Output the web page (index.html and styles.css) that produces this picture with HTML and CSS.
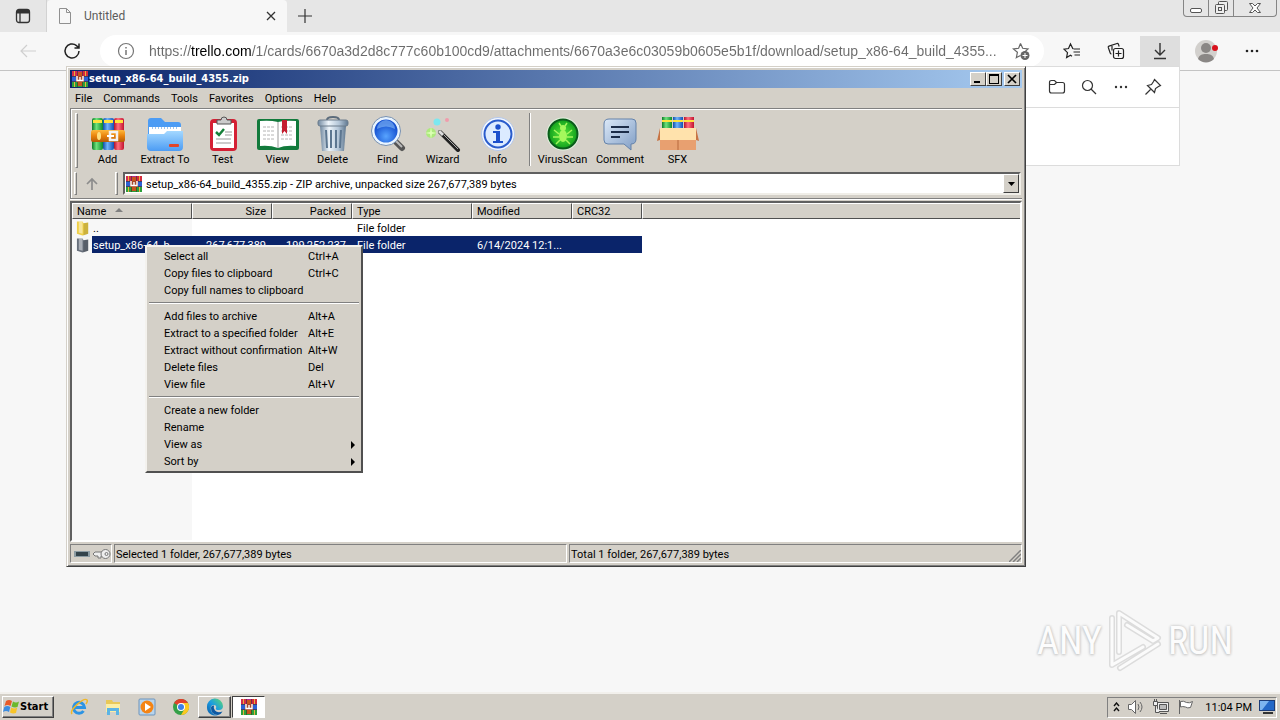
FILE: index.html
```html
<!DOCTYPE html>
<html lang="en">
<head>
<meta charset="utf-8">
<title>Untitled</title>
<link rel="stylesheet" href="styles.css">
</head>
<body>
<svg class="defs" aria-hidden="true">
  <defs>
    <linearGradient id="gGreen"><stop offset="0" stop-color="#0b7a26"/><stop offset=".4" stop-color="#6fe37c"/><stop offset="1" stop-color="#0c8a2c"/></linearGradient>
    <linearGradient id="gBlue"><stop offset="0" stop-color="#0f4fa8"/><stop offset=".4" stop-color="#6fb4fa"/><stop offset="1" stop-color="#1450b4"/></linearGradient>
    <linearGradient id="gRed"><stop offset="0" stop-color="#b5122a"/><stop offset=".4" stop-color="#ff6f7f"/><stop offset="1" stop-color="#c3142f"/></linearGradient>
    <linearGradient id="gGold" x2="0" y2="1"><stop offset="0" stop-color="#ffb93c"/><stop offset=".5" stop-color="#e8820c"/><stop offset="1" stop-color="#b45a06"/></linearGradient>
    <linearGradient id="gFolder" x2="0" y2="1"><stop offset="0" stop-color="#a4d8ff"/><stop offset="1" stop-color="#4c9cf4"/></linearGradient>
    <linearGradient id="gSteel"><stop offset="0" stop-color="#7088a0"/><stop offset=".35" stop-color="#eef5fb"/><stop offset=".7" stop-color="#b4c6d8"/><stop offset="1" stop-color="#607890"/></linearGradient>
    <linearGradient id="gNote" x2="1" y2="1"><stop offset="0" stop-color="#dce9f8"/><stop offset="1" stop-color="#7f9cc4"/></linearGradient>
    <radialGradient id="gLens" cy=".7"><stop offset="0" stop-color="#58a4ff"/><stop offset="1" stop-color="#1450d0"/></radialGradient>
    <radialGradient id="gVirus"><stop offset="0" stop-color="#5ce83a"/><stop offset="1" stop-color="#10a01c"/></radialGradient>
    <linearGradient id="gEdge" x1="0" y1="1" x2="1" y2="0"><stop offset="0" stop-color="#0c59a4"/><stop offset=".5" stop-color="#1b9de2"/><stop offset="1" stop-color="#5fdc6a"/></linearGradient>
  </defs>
  <symbol id="rar" viewBox="0 0 16 16">
    <path fill="#d42a4a" d="M0 0h5v5H0z"/><path fill="#b52a8c" d="M5 0h6v5H5z"/><path fill="#d42a3a" d="M11 0h5v5h-5z"/>
    <path fill="#2c60d4" d="M0 5h16v6H0z"/><path fill="#2ca03a" d="M0 11h16v5H0z"/>
    <path fill="#4a2a20" opacity=".6" d="M0 5h16v1H0zM0 10h16v1H0zM5 0h1v5H5zM10 0h1v5h-1zM5 11h1v5H5zM10 11h1v5h-1z"/>
    <path fill="#e8b03c" d="M2 0h1v5H2zM13 0h1v5h-1zM2 11h1v5H2zM13 11h1v5h-1z"/>
    <path fill="#c8541c" d="M6 1h4v14H6z"/><path fill="#a4482c" d="M4 5h8v6H4z"/>
    <path fill="none" stroke="#fff" stroke-width="1.400" d="M5 5v4.500h6V5M8 6v3"/>
  </symbol>
  <symbol id="folder" viewBox="0 0 16 16">
    <path fill="currentColor" d="M1 1h6l1 2 5-1v12l-6 2-6-2z"/><path fill="#fff" opacity=".45" d="M3 1h4v13l-4-1z"/><path fill="#000" opacity=".15" d="M8 3l5-1v12l-5 2z"/>
  </symbol>
</svg>

<main class="browser">
  <header class="tabs">
    <button class="tab-menu" aria-label="Tab actions"><svg width="16" height="16" viewBox="0 0 16 16"><rect x="1.500" y="1.500" width="13" height="13" rx="2.500" fill="none" stroke="#333" stroke-width="1.300"/><path fill="#333" d="M2 2h12v3.500H2z"/><path d="M5 5v9" stroke="#333" stroke-width="1.300"/></svg></button>
    <div class="tab">
      <svg width="14" height="16" viewBox="0 0 14 16" fill="none" stroke="#909090"><path d="M1.500.5h7l4 4v11h-11zM8.500.5v4h4"/></svg>
      <span class="tab-title">Untitled</span>
      <button class="plain" aria-label="Close tab"><svg width="10" height="10" viewBox="0 0 10 10"><path d="M1 1l8 8M9 1L1 9" stroke="#333" stroke-width="1.300"/></svg></button>
    </div>
    <button class="plain new-tab" aria-label="New tab"><svg width="16" height="16" viewBox="0 0 16 16"><path d="M8 1v14M1 8h14" stroke="#333" stroke-width="1.200"/></svg></button>
    <div class="caption">
      <button aria-label="Minimize"><svg width="14" height="14" viewBox="0 0 14 14"><rect x="1.500" y="7.500" width="11" height="4" rx="1.500" fill="#fff" stroke="#555"/></svg></button>
      <button aria-label="Restore"><svg width="14" height="14" viewBox="0 0 14 14" fill="#eee" stroke="#555"><rect x="4.500" y=".5" width="9" height="9" rx="1"/><rect x="1.500" y="3.500" width="9" height="9" rx="1"/><rect x="4.500" y="6.500" width="3" height="3"/></svg></button>
      <button class="wide" aria-label="Close"><svg width="14" height="14" viewBox="0 0 14 14"><path d="M1.500 2.500h3L7 5l2.500-2.500h3L9 7l3.500 4.500h-3L7 9l-2.500 2.500h-3L5 7z" fill="#fff" stroke="#555"/></svg></button>
    </div>
  </header>
  <div class="nav">
    <button class="plain back" aria-label="Back"><svg width="18" height="16" viewBox="0 0 18 16" fill="none" stroke="#cfcfcf" stroke-width="1.200"><path d="M17 8H2M8 2L2 8l6 6"/></svg></button>
    <button class="plain reload" aria-label="Reload"><svg width="18" height="18" viewBox="0 0 18 18" fill="none" stroke="#222" stroke-width="1.500"><path d="M16 9a7 7 0 1 1-2.500-5.400L15.500 6M16 1.500V6h-4.500"/></svg></button>
    <div class="omnibox">
      <svg width="18" height="18" viewBox="0 0 18 18" fill="none" stroke="#767676" stroke-width="1.200"><circle cx="9" cy="9" r="7.500"/><path d="M9 8v5M9 5v1.500" stroke-width="1.500"/></svg>
      <input type="text" aria-label="Address" value="https://trello.com/1/cards/6670a3d2d8c777c60b100cd9/attachments/6670a3e6c03059b0605e5b1f/download/setup_x86-64_build_4355...">
      <button class="plain" aria-label="Add to favorites"><svg width="18" height="18" viewBox="0 0 18 18"><path d="M8.500 1.500l2.200 4.800 5.300.6-3.800 3.500M5 15l-.6.500 1-5.200-4-3.400 5.200-.6 1.900-4.800M4.500 15.500l4-2" fill="none" stroke="#666" stroke-width="1.200"/><circle cx="13" cy="13.500" r="4.500" fill="#666"/><path d="M13 11v5M10.500 13.500h5" stroke="#fff"/></svg></button>
    </div>
    <div class="nav-tools">
      <button class="plain" aria-label="Favorites"><svg width="18" height="18" viewBox="0 0 18 18" fill="none" stroke="#222" stroke-width="1.200"><path d="M10 7L7.500 2 5.500 6.500 1 7.200l3.500 3.400L3.600 15.500l3.900-2.200 1.500 1M10.500 7H17M10.500 10H17M11.500 13H17"/></svg></button>
      <button class="plain" aria-label="Collections"><svg width="18" height="18" viewBox="0 0 18 18" fill="none" stroke="#222" stroke-width="1.200"><path d="M4.500 12q-1 0-1.300-1L1.300 5.500q-.3-1 .7-1.400l8-2.600q1-.3 1.400.7l.8 2.300M5 3.200v5.300"/><rect x="6.500" y="6.500" width="10" height="10" rx="2"/><path d="M11.500 8.500v6M8.500 11.500h6"/></svg></button>
      <button class="plain active" aria-label="Downloads"><svg width="16" height="18" viewBox="0 0 16 18" fill="none" stroke="#333" stroke-width="1.400"><path d="M8 1v12M3 8l5 5 5-5M2 16.500h12"/></svg></button>
      <button class="plain profile" aria-label="Profile"><svg width="24" height="24" viewBox="0 0 24 24"><circle cx="12" cy="12" r="11" fill="#d2d0cd"/><circle cx="12" cy="9" r="5" fill="#8a8785"/><path d="M4 20c1-4 4-5 8-5s7 1 8 5a11 11 0 0 1-16 0z" fill="#8a8785"/><circle cx="21" cy="9" r="3" fill="#d8111c"/></svg></button>
      <button class="plain" aria-label="Settings"><svg width="16" height="4" viewBox="0 0 16 4" fill="#222"><circle cx="3" cy="2" r="1.300"/><circle cx="8" cy="2" r="1.300"/><circle cx="13" cy="2" r="1.300"/></svg></button>
    </div>
  </div>
  <section class="downloads">
    <div class="downloads-bar">
      <button class="plain" aria-label="Open folder"><svg width="18" height="16" viewBox="0 0 18 16" fill="none" stroke="#333" stroke-width="1.200"><path d="M1.500 12V3.500q0-2 2-2h3l2 2h6q2 0 2 2V12q0 2-2 2h-11q-2 0-2-2zM1.500 5.500h5l2-2"/></svg></button>
      <button class="plain" aria-label="Search"><svg width="16" height="16" viewBox="0 0 16 16" fill="none" stroke="#333" stroke-width="1.200"><circle cx="6.500" cy="6.500" r="5"/><path d="M10 10l5 5"/></svg></button>
      <button class="plain" aria-label="More"><svg width="16" height="4" viewBox="0 0 16 4" fill="#333"><circle cx="3" cy="2" r="1.200"/><circle cx="8" cy="2" r="1.200"/><circle cx="13" cy="2" r="1.200"/></svg></button>
      <button class="plain" aria-label="Pin"><svg width="18" height="18" viewBox="0 0 18 18" fill="none" stroke="#333" stroke-width="1.200"><path d="M10.500 1.500l6 6-2 1-3 2-1 4-7-7 4-1 2-3zM6.500 11.500L1.500 16.500"/></svg></button>
    </div>
  </section>
  <div class="watermark">
    <span>ANY</span>
    <svg width="58" height="66" viewBox="0 0 58 66" fill="none" stroke-linejoin="round" stroke-linecap="round"><g stroke="#dcdcdc" stroke-width="6"><path d="M13 44V5l39 25-5 3L21 17M6 10v47l31-18M14 60l38-24"/></g><g stroke="#fbfbfb" stroke-width="3"><path d="M13 44V5l39 25-5 3L21 17M6 10v47l31-18M14 60l38-24"/></g></svg>
    <span>RUN</span>
  </div>

  <section class="window">
    <div class="titlebar">
      <svg width="16" height="16"><use href="#rar"/></svg>
      <h1>setup_x86-64_build_4355.zip</h1>
      <button class="winbtn" aria-label="Minimize"><svg width="10" height="10" viewBox="0 0 10 10"><path d="M1 7h6v2H1z"/></svg></button>
      <button class="winbtn" aria-label="Maximize"><svg width="10" height="10" viewBox="0 0 10 10"><path d="M0 0h10v10H0zM1 2v7h8V2z" fill-rule="evenodd"/></svg></button>
      <button class="winbtn close" aria-label="Close"><svg width="10" height="10" viewBox="0 0 10 10"><path d="M1 1l8 8M9 1L1 9" stroke="#000" stroke-width="1.700"/></svg></button>
    </div>
    <nav class="menubar"><button>File</button><button>Commands</button><button>Tools</button><button>Favorites</button><button>Options</button><button>Help</button></nav>
    <div class="bars">
      <div class="toolbar">
        <i class="grip"></i>
        <button><svg viewBox="0 0 36 36"><rect x="2" y="2" width="11" height="32" rx="2" fill="url(#gGreen)"/><rect x="13" y="2" width="11" height="32" rx="2" fill="url(#gBlue)"/><rect x="24" y="2" width="10" height="32" rx="2" fill="url(#gRed)"/><path fill="#ffe23c" d="M3 4h9v3H3zM14 4h9v3h-9zM25 4h8v3h-8z"/><rect x="1" y="14" width="34" height="12" rx="2" fill="url(#gGold)"/><path d="M20 16h7v8h-7z" fill="none" stroke="#f2f2f2" stroke-width="2.500"/><path d="M17 20h7" stroke="#fff" stroke-width="2"/><ellipse cx="9" cy="20" rx="2" ry="4" fill="#ffdf80"/></svg>Add</button>
        <button class="w60"><svg viewBox="0 0 36 36"><path fill="#4c9cf4" d="M1 5q0-3 3-3h10l4 4h13q3 0 3 3v16H1z"/><path fill="#fff" d="M2 11h32v10H2z"/><path stroke="#9cc4ee" stroke-dasharray="1 2" stroke-width="2" d="M5 12h26"/><path fill="url(#gFolder)" d="M0 18h17l3-3h16v16q0 4-4 4H4q-4 0-4-4z"/><rect x="22" y="28" width="10" height="3" rx="1" fill="#e2452a"/></svg>Extract To</button>
        <button><svg viewBox="0 0 36 36"><rect x="5" y="3" width="27" height="32" rx="4" fill="#d42034"/><rect x="8" y="7" width="21" height="25" fill="#fff"/><path fill="#ccc" stroke="#555" d="M12 8V4h4q0-3 3-3t3 3h4v4z"/><path fill="none" stroke="#16803a" stroke-width="2.500" d="M11 16l3 3 5-6"/><path stroke="#999" d="M20 16h7M20 19h7M11 23h15M11 27h15"/></svg>Test</button>
        <button><svg class="book" viewBox="0 0 42 36"><rect x="0" y="3" width="42" height="31" rx="2" fill="#127a3c"/><path fill="#fff" d="M3 5q10-1 18 1 8-2 18-1v25q-11-1-18 2-8-3-18-2z"/><path stroke="#999" d="M21 6v26"/><path stroke="#b4b4b4" stroke-dasharray="3 1" d="M6 11h12M6 15h12M6 19h12M6 23h12M24 15h12M24 19h12M24 23h12M24 11h12"/><path fill="#c41e30" d="M25 4h5v14l-2.500-3-2.500 3z"/></svg>View</button>
        <button><svg viewBox="0 0 36 36"><path fill="none" stroke="#5c6c7c" stroke-width="2" d="M12 4q0-3 6-3t6 3"/><path fill="url(#gSteel)" d="M5 10h26l-2 25H7z"/><rect x="3" y="4" width="30" height="6" rx="2" fill="url(#gSteel)" stroke="#6c7c8c"/><path stroke="#5c7690" stroke-width="2" d="M11 14l1 18M16 14v18M21 14v18M26 14l-1 18"/></svg>Delete</button>
        <button><svg viewBox="0 0 36 36"><path stroke="#555" stroke-width="6" stroke-linecap="round" d="M26 26l6 6"/><path stroke="#bbb" stroke-width="2" d="M26 25l6 6"/><circle cx="16" cy="15" r="13" fill="url(#gLens)" stroke="#e8f4ff" stroke-width="3"/><circle cx="16" cy="15" r="14.500" fill="none" stroke="#7890b0"/><path fill="#9cd0ff" opacity=".5" d="M7 13a9 9 0 0 1 18 0q-9-5-18 0z"/></svg>Find</button>
        <button><svg viewBox="0 0 36 36"><path stroke="#222" stroke-width="4" stroke-linecap="round" d="M15 16l18 18"/><path stroke="#ddd" stroke-width="3" d="M14 15l4 4"/><path stroke="#aaa" d="M19 19l14 14"/><circle cx="6" cy="17" r="5" fill="#a4f06c" opacity=".8"/><path fill="#dcffb4" d="M6 11l1 5 5 1-5 1-1 5-1-5-5-1 5-1z"/><circle cx="12" cy="6" r="3.500" fill="#7ce8f0"/><circle cx="22" cy="4" r="2" fill="#f09cac"/></svg>Wizard</button>
        <button><svg viewBox="0 0 36 36"><circle cx="18" cy="18" r="16.500" fill="#f2f7ff" stroke="#b4c8ec"/><circle cx="18" cy="18" r="13.500" fill="#dcebff" stroke="#2a5ccc" stroke-width="2"/><circle cx="18" cy="11" r="2.700" fill="#1c50cc"/><path fill="#1c50cc" d="M13 15h7v10h3v2H13v-2h3v-8h-3z"/></svg>Info</button>
        <i class="divider"></i>
        <button><svg viewBox="0 0 36 36"><circle cx="18" cy="18" r="16.500" fill="#e4f4e0"/><circle cx="18" cy="18" r="14.500" fill="url(#gVirus)" stroke="#0c5c1c" stroke-width="2"/><ellipse cx="18" cy="20" rx="4" ry="6" fill="#a4f85c"/><circle cx="18" cy="12" r="3" fill="#a4f85c"/><path fill="none" stroke="#a4f85c" stroke-width="1.500" d="M14 18l-5-4M14 21H8M15 24l-4 4M22 18l5-4M22 21h6M21 24l4 4M16 10l-2-3M20 10l2-3"/></svg>VirusScan</button>
        <button class="w60"><svg viewBox="0 0 36 36"><path fill="url(#gNote)" stroke="#6482aa" d="M7 3h23q4 0 4 4v16q0 5-5 5v6l-7-6H6q-4 0-4-4V8q0-5 5-5z"/><path stroke="#1c2c48" stroke-width="2" d="M9 11h18M9 16h18M9 21h9"/></svg>Comment</button>
        <button><svg class="book" viewBox="0 0 42 36"><rect x="5" y="1" width="10" height="14" fill="url(#gGreen)"/><rect x="16" y="1" width="10" height="14" fill="url(#gBlue)"/><rect x="27" y="1" width="10" height="14" fill="url(#gRed)"/><path fill="#ffe23c" d="M5 4h10v2H5zM16 4h10v2H16zM27 4h10v2H27z"/><path fill="#e8a070" d="M3 13h36v21H3z"/><path fill="#ffe2ac" d="M3 12h36v12H3z"/><path fill="#c87444" d="M3 12v12l-3 1zM39 12v12l3 1z"/><path stroke="#b8683c" d="M21 24v10"/></svg>SFX</button>
      </div>
      <div class="pathbar">
        <i class="grip"></i>
        <button class="up" aria-label="Up one level"><svg width="14" height="14" viewBox="0 0 14 14" fill="none" stroke="#8c8c8c" stroke-width="1.700"><path d="M7 13V2M2 7l5-5 5 5"/></svg></button>
        <i class="grip"></i>
        <div class="combo">
          <svg width="16" height="16"><use href="#rar"/></svg>
          <select aria-label="Archive"><option>setup_x86-64_build_4355.zip - ZIP archive, unpacked size 267,677,389 bytes</option></select>
          <span class="arrow"><svg width="7" height="4"><path d="M0 0h7L3.500 4z"/></svg></span>
        </div>
      </div>
    </div>
    <div class="list">
      <table>
        <thead><tr><th class="c120">Name <svg class="sort" width="8" height="4"><path fill="#808080" d="M4 0l4 4H0z"/></svg></th><th class="c80 num">Size</th><th class="c80 num">Packed</th><th class="c120">Type</th><th class="c100">Modified</th><th class="c70">CRC32</th><th class="rest"></th></tr></thead>
        <tbody>
          <tr><td><span class="name"><svg class="yellow" width="15" height="16"><use href="#folder"/></svg><b>..</b></span></td><td></td><td></td><td>File folder</td><td></td><td></td><td></td></tr>
          <tr class="selected"><td><span class="name"><svg class="gray" width="15" height="16"><use href="#folder"/></svg><b>setup_x86-64_b...</b></span></td><td class="num">267,677,389</td><td class="num">199,252,237</td><td>File folder</td><td>6/14/2024 12:1...</td><td></td><td></td></tr>
        </tbody>
      </table>
    </div>
    <footer class="status">
      <span class="cell icons"><svg width="16" height="12" viewBox="0 0 16 12"><path fill="#8c9ca4" d="M0 3h16v6H0z"/><path fill="#34444c" d="M2 4h12v4H2z"/></svg><svg width="18" height="14" viewBox="0 0 18 14" fill="#eee" stroke="#777"><path d="M10 5H2L0 7l2 2h3v2h3V9h2"/><circle cx="12.500" cy="7" r="4.500"/><circle cx="13.500" cy="7" r="1.500"/></svg></span>
      <span class="cell">Selected 1 folder, 267,677,389 bytes</span>
      <span class="cell">Total 1 folder, 267,677,389 bytes<svg class="size-grip" width="12" height="12" viewBox="0 0 12 12"><path d="M0 12L12 0M4 12l8-8M8 12l4-4" stroke="#808080" stroke-width="1.500"/></svg></span>
    </footer>
    <div class="context" role="menu">
      <button role="menuitem">Select all<span>Ctrl+A</span></button>
      <button role="menuitem">Copy files to clipboard<span>Ctrl+C</span></button>
      <button role="menuitem">Copy full names to clipboard</button>
      <hr>
      <button role="menuitem">Add files to archive<span>Alt+A</span></button>
      <button role="menuitem">Extract to a specified folder<span>Alt+E</span></button>
      <button role="menuitem">Extract without confirmation<span>Alt+W</span></button>
      <button role="menuitem">Delete files<span>Del</span></button>
      <button role="menuitem">View file<span>Alt+V</span></button>
      <hr>
      <button role="menuitem">Create a new folder</button>
      <button role="menuitem">Rename</button>
      <button role="menuitem">View as<svg width="4" height="8"><path d="M0 0l4 4-4 4z"/></svg></button>
      <button role="menuitem">Sort by<svg width="4" height="8"><path d="M0 0l4 4-4 4z"/></svg></button>
    </div>
  </section>
</main>

<footer class="taskbar">
  <button class="start"><svg width="17" height="16" viewBox="0 0 17 16"><path fill="#e85a28" d="M3 2q3-2 6 0L7.500 7q-3-2-6 0z"/><path fill="#6cb82c" d="M10 2.500q3 2 6 0L14.500 8q-3 1-6-.5z"/><path fill="#3c8ce0" d="M1.300 8q3-2 6 0L6 13q-3-2-6 0z"/><path fill="#f8c428" d="M8.200 8.500q3 2 6 0L13 14q-3 1-6-.5z"/></svg>Start</button>
  <button class="launch" aria-label="Internet Explorer"><svg width="18" height="18" viewBox="0 0 18 18" fill="none"><path stroke="#2c94e4" stroke-width="3" d="M4 9.500h10.500A5.500 5.500 0 1 0 13.500 13"/><path stroke="#f0b828" stroke-width="1.500" d="M2 16C-1 12 14-1 17 2q1 1-1 4"/></svg></button>
  <button class="launch" aria-label="Explorer"><svg width="18" height="18" viewBox="0 0 18 18"><path fill="#e8c858" d="M2 2h6l1 2h7v9H2z"/><path fill="#fbeea4" d="M2 6h14v8H2z"/><path fill="#5cb4e4" d="M3 10h12v7h-3v-4H6v4H3z"/></svg></button>
  <button class="launch" aria-label="Media Player"><svg width="18" height="18" viewBox="0 0 18 18"><rect x="1" y="1" width="16" height="16" rx="1" fill="#b8d4ec" stroke="#6c94bc"/><circle cx="9" cy="9" r="6.500" fill="#f48414"/><path fill="#fff" d="M7 5l6 4-6 4z"/></svg></button>
  <button class="launch" aria-label="Chrome"><svg width="16" height="16" viewBox="0 0 16 16"><circle cx="8" cy="8" r="8" fill="#34a048"/><path fill="#e0402c" d="M8 8L1 4a8 8 0 0 1 14 0z"/><path fill="#fcc820" d="M8 4h7a8 8 0 0 1-7 12l3.500-6z"/><circle cx="8" cy="8" r="4" fill="#fff"/><circle cx="8" cy="8" r="3" fill="#3c80e8"/></svg></button>
  <button class="task" aria-label="Edge"><svg width="18" height="18" viewBox="0 0 18 18"><path fill="url(#gEdge)" d="M1 9a8 8 0 0 1 16-1q0 4-4 4-4 0-3-2 1-3-2-3-4 0-3 5t7 5A8 8 0 0 1 1 9z"/><path fill="#0c59a4" d="M5 10q0 7 7 7 3-.5 4.500-3.500-5 2-7.500-1-2-2-1-5-3 0-3 2.500z"/></svg></button>
  <button class="task pressed" aria-label="WinRAR"><svg width="16" height="16"><use href="#rar"/></svg></button>
  <div class="tray">
    <svg width="7" height="10" viewBox="0 0 7 10" fill="none" stroke="#111" stroke-width="1.400"><path d="M1 4l2.500-3L6 4M1 9l2.500-3L6 9"/></svg>
    <svg width="18" height="16" viewBox="0 0 18 16" fill="#fff" stroke="#666"><path d="M1.500 5.500h3l4-4v13l-4-4h-3z"/><path fill="none" d="M11 5q2 3 0 6M13 3q4 5 0 10"/></svg>
    <svg width="18" height="16" viewBox="0 0 18 16" fill="#eee" stroke="#555"><path d="M5.500 3.500h11v9h-11zM8 14.500h7"/><path fill="#bbb" d="M7.500 5.500h7v5h-7z"/><path d="M1.500 2.500h4v4h-4zM3.500 6.500v7h4"/><path d="M2.500 0v2M4.500 0v2"/></svg>
    <svg width="17" height="16" viewBox="0 0 17 16" fill="#fff" stroke="#666"><path d="M2.500 1v14M3.500 2.500q3-1 6 1 3 1 6-1l-2 6q-3 1-5-.5-3-1-5 0z"/></svg>
    <time>11:04 PM</time>
    <svg width="16" height="16" viewBox="0 0 16 16"><rect x=".5" y="1.500" width="15" height="10" fill="#2468c8" stroke="#1c3c78"/><path fill="#7cb4f0" d="M1 2h9L3 11H1z"/><path fill="#333" d="M4 13h10v2H4z"/></svg>
  </div>
</footer>
</body>
</html>
```
FILE: styles.css
```css
* { box-sizing: border-box; }
body { margin: 0; min-height: 100vh; display: flex; flex-direction: column; background: #f7f7f7; color: #000; font: 11px/13px Roboto, "Noto Sans", sans-serif; }
button, input, select { font: inherit; color: inherit; margin: 0; padding: 0; border: 0; background: none; }
svg { display: block; flex: none; }
.defs { position: absolute; width: 0; height: 0; }
.browser { position: relative; flex: 1; }

.tabs { display: flex; height: 32px; background: #e6e6e6; align-items: stretch; }
.tab-menu { width: 47px; display: grid; place-items: center; border-right: 1px solid #d2d2d2; }
.tab { width: 240px; display: flex; align-items: center; padding: 0 11px; gap: 12px; background: #f7f7f7; border-radius: 4px 4px 0 0; font: 12px/16px Roboto, "Noto Sans", sans-serif; color: #5c5c5c; }
.tab-title { flex: 1; }
.plain { display: grid; place-items: center; }
.new-tab { width: 36px; }
.caption { display: flex; height: 17px; margin: 0 3px 0 auto; border: 1px solid #858585; border-top: 0; border-radius: 0 0 4px 4px; }
.caption button { width: 25px; display: grid; place-items: center; border-right: 1px solid #858585; }
.caption .wide { width: 42px; border: 0; }

.nav { display: flex; height: 39px; align-items: center; background: #f7f7f7; border-bottom: 1px solid #c4c4c4; }
.back { width: 56px; }
.reload { width: 32px; }
.omnibox { flex: 1; display: flex; align-items: center; height: 32px; margin: 0 6px 0 12px; padding: 0 14px 0 17px; gap: 14px; border-radius: 16px; background: #fff; }
.omnibox input { flex: 1; min-width: 0; font: 14px/20px "Liberation Sans", Arial, sans-serif; color: transparent; background: linear-gradient(90deg, #6b6b6b 42px, #000 42px, #000 103px, #6b6b6b 103px); -webkit-background-clip: text; background-clip: text; }
.nav-tools { display: flex; align-self: stretch; padding-top: 4px; }
.nav-tools button { width: 40px; margin: 0 2px; padding-bottom: 4px; }
.nav-tools .active { background: #dedede; }
.nav-tools .profile { margin: 0 4px; }
.nav-tools button:last-child { margin-right: 8px; }

.downloads { position: absolute; top: 66px; right: 100px; width: 360px; height: 100px; background: #fff; border: 1px solid #dcdcdc; }
.downloads-bar { display: flex; justify-content: flex-end; height: 41px; padding-right: 10px; border-bottom: 1px solid #dcdcdc; }
.downloads-bar button { width: 32px; }

.watermark { position: absolute; right: 47px; bottom: 18px; display: flex; align-items: center; gap: 4px; font: 38px/66px "Liberation Sans Narrow", "Roboto Condensed", sans-serif; color: #fcfcfc; text-shadow: 0 0 3px #bbb, 0 1px 3px #ccc; }

.window { position: absolute; left: 66px; top: 66px; width: 75vw; padding: 3px; background: #d4d0c8; border: 1px solid; border-color: #d4d0c8 #404040 #404040 #d4d0c8; box-shadow: inset 1px 1px #fff, inset -1px -1px #808080; }
.titlebar { display: flex; align-items: center; height: 18px; padding: 0 2px; color: #fff; background: linear-gradient(90deg, #0a246a, #a6caf0); }
.titlebar h1 { flex: 1; margin: 0 0 0 1px; font: bold 11px/16px "DejaVu Sans Condensed", "DejaVu Sans", sans-serif; }
.winbtn { width: 16px; height: 14px; display: grid; place-items: center; background: #d4d0c8; border: 1px solid; border-color: #fff #404040 #404040 #fff; }
.winbtn.close { margin-left: 2px; }
.menubar { display: flex; height: 20px; padding-left: 5px; gap: 11px; }
.bars { border-top: 1px solid #808080; border-bottom: 1px solid #808080; box-shadow: inset 1px 1px #fff, 0 1px #fff; border-left: 1px solid #808080; }
.toolbar { display: flex; height: 61px; padding: 4px 4px 2px; }
.grip { flex: none; width: 3px; border: 1px solid; border-color: #fff #808080 #808080 #fff; }
.toolbar .grip { margin-right: 2px; }
.toolbar button { width: 55px; display: flex; flex-direction: column; align-items: center; padding-top: 3px; gap: 1px; white-space: nowrap; }
.toolbar .w60 { width: 60px; }
.toolbar button svg { width: 36px; height: 36px; }
.toolbar button svg.book { width: 42px; }
.divider { width: 2px; margin: 0 4px 2px; border-left: 1px solid #808080; border-right: 1px solid #fff; }
.pathbar { display: flex; height: 28px; padding: 2px 1px 3px 3px; }
.up { width: 38px; display: grid; place-items: center; padding-right: 8px; }
.combo { position: relative; flex: 1; display: flex; align-items: center; margin-left: 5px; padding-left: 1px; gap: 4px; background: #fff; border: 2px solid; border-color: #606060 #f0eee8 #f0eee8 #606060; }
.combo select { flex: 1; height: 17px; padding-top: 2px; appearance: none; }
.arrow { position: absolute; right: 0; top: 0; bottom: 0; width: 16px; display: grid; place-items: center; background: #d4d0c8; border: 1px solid; border-color: #fff #404040 #404040 #fff; pointer-events: none; }

.list { height: 341px; margin: 2px 0 0 0; border: 2px solid; border-color: #606060 #fff #fff #606060; background: linear-gradient(90deg, #f7f7f7 120px, #fff 120px); }
table { width: 100%; table-layout: fixed; border-collapse: separate; border-spacing: 0; }
th { height: 16px; padding: 0 5px 0 4px; text-align: left; font-weight: normal; background: #d4d0c8; border: 1px solid; border-color: #fff #505050 #505050 #fff; white-space: nowrap; }
th.rest { border-right: 0; }
td { height: 17px; padding: 2px 6px 0 5px; white-space: nowrap; overflow: hidden; }
.num { text-align: right; }
.c120 { width: 120px; } .c100 { width: 100px; } .c80 { width: 80px; } .c70 { width: 70px; }
.sort { display: inline-block; margin: 0 0 3px 6px; }
td:first-child { padding: 0 0 0 4px; }
.name { display: flex; align-items: center; gap: 1px; }
.name b { flex: 1; padding: 2px 0 0 1px; line-height: 15px; font-weight: normal; }
.yellow { color: #f0d048; }
.gray { color: #68707c; }
.selected td:not(:first-child):not(:last-child), .selected b { background: #0a246a; color: #fff; }

.status { display: flex; gap: 2px; height: 19px; margin-top: 2px; }
.cell { position: relative; flex: 1; padding: 3px 1px 1px; border: 1px solid; border-color: #808080 #fff #fff #808080; }
.cell.icons { flex: none; display: flex; align-items: center; gap: 3px; width: 42px; padding: 0 3px; }
.size-grip { position: absolute; right: 0; bottom: 0; }

.context { position: absolute; left: 78px; top: 178px; width: 218px; padding: 1px; background: #d4d0c8; border: 2px solid; border-color: #f4f2ee #505050 #505050 #f4f2ee; }
.context button { display: flex; align-items: center; width: 100%; height: 17px; padding: 0 5px 0 16px; }
.context span { width: 47px; margin-left: auto; text-align: left; }
.context button svg { margin-left: auto; }
.context hr { height: 2px; margin: 3px 1px 4px; border: 0; border-top: 1px solid #808080; border-bottom: 1px solid #fff; }

.taskbar { display: flex; align-items: center; height: 28px; padding: 4px 3px 2px 2px; background: #d4d0c8; box-shadow: inset 0 2px #f2f0ec; }
.start { display: flex; align-items: center; width: 52px; height: 22px; margin-right: 8px; font: bold 11px/16px "DejaVu Sans Condensed", sans-serif; border: 1px solid; border-color: #fff #404040 #404040 #fff; box-shadow: inset -1px -1px #808080; }
.launch { width: 34px; display: grid; place-items: center; }
.task { width: 33px; height: 22px; margin-right: 1px; display: grid; place-items: center; border: 1px solid; border-color: #fff #404040 #404040 #fff; box-shadow: inset -1px -1px #808080; }
.task.pressed { background: #fff; border-color: #404040 #fff #fff #404040; box-shadow: none; }
.tray { display: flex; align-items: center; gap: 7px; height: 21px; margin-left: auto; padding: 0 1px 0 5px; border: 1px solid; border-color: #808080 #fff #fff #808080; }
.tray time { margin-left: 4px; }
```
